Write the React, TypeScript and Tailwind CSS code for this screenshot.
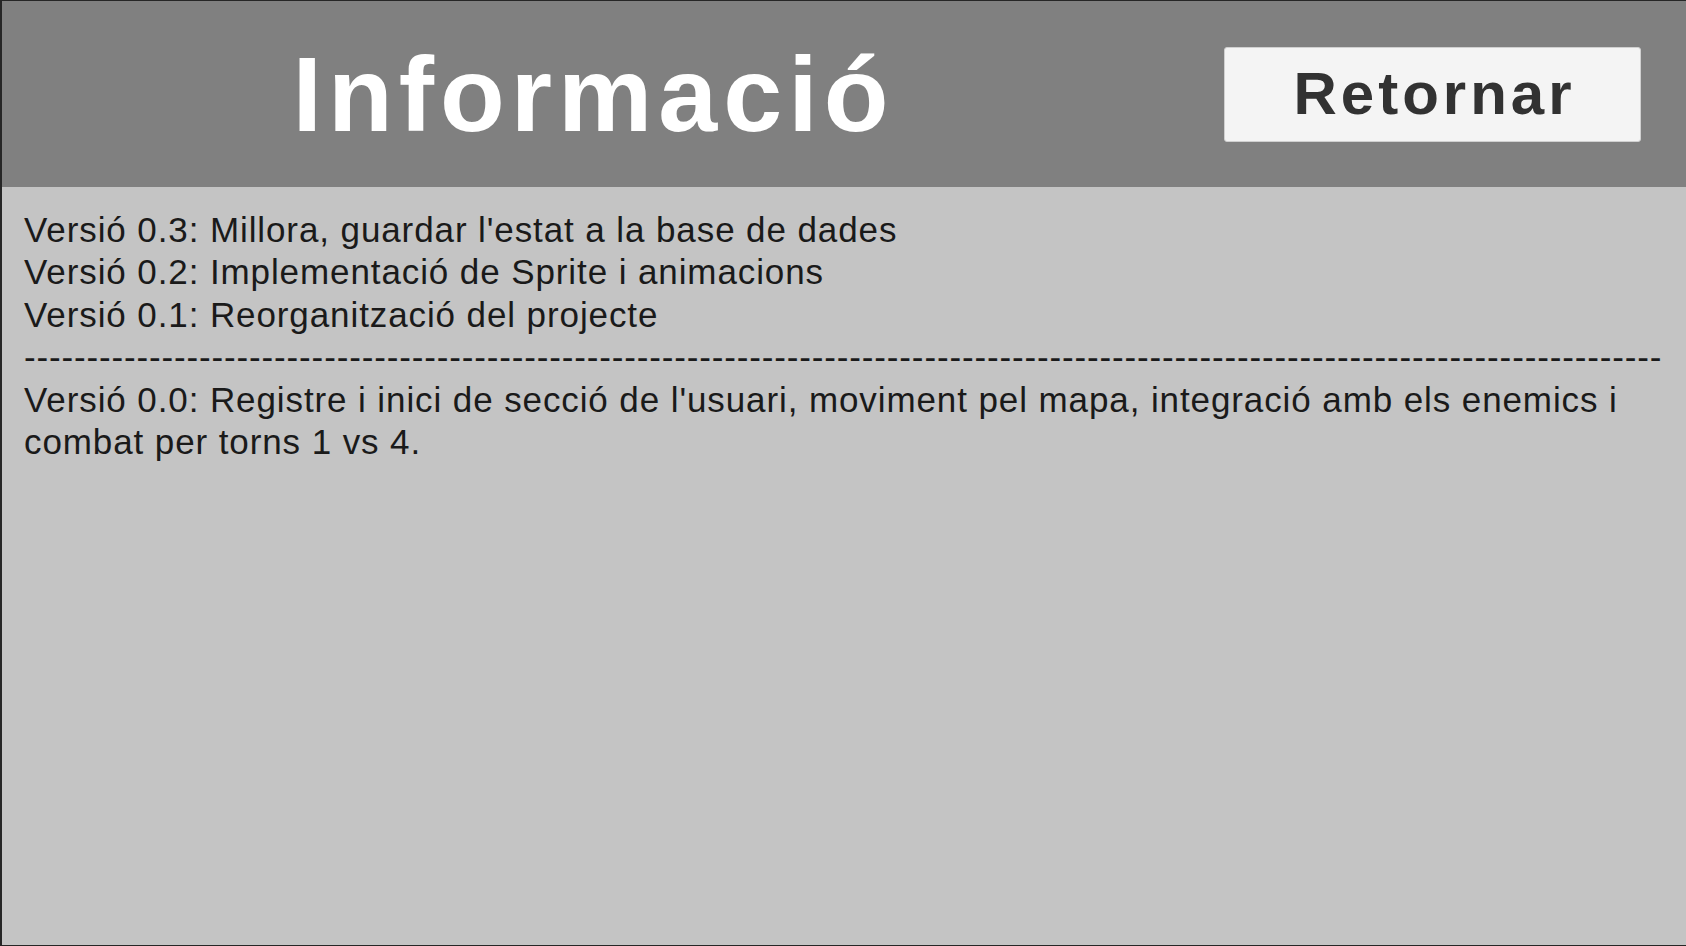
import React from 'react'

const versions = [
  "Versió 0.3: Millora, guardar l'estat a la base de dades",
  'Versió 0.2: Implementació de Sprite i animacions',
  'Versió 0.1: Reorganització del projecte',
]

const divider = '-'.repeat(131)

export default function App() {
  return (
    <div className="w-full h-[946px] bg-[#262626] pt-[1px] pb-[1px] pl-[2px] flex flex-col font-['Liberation_Sans',Arial,sans-serif]">
      {/* header bar */}
      <div className="h-[186px] bg-[#808080] flex items-center shrink-0">
        <div className="flex-1 flex justify-center pr-[39px]">
          <h1 className="text-[106px] leading-none font-bold text-white tracking-[6px]">Informació</h1>
        </div>
        <button
          type="button"
          className="w-[417px] h-[95px] mr-[45px] bg-[#f4f4f4] border border-[#d0d0d0] rounded-[3px] flex items-center justify-center"
        >
          <span className="text-[60px] leading-none font-bold text-[#323232] tracking-[4px] pl-[4px]">Retornar</span>
        </button>
      </div>

      {/* changelog */}
      <div className="flex-1 bg-[#c4c4c4] pt-[22px] pl-[22px] pr-[16px] text-[35px] leading-[42.4px] tracking-[0.9px] text-[#1a1a1a]">
        {versions.map((v) => (
          <div key={v}>{v}</div>
        ))}
        <div className="whitespace-nowrap tracking-[0.85px]">{divider}</div>
        <p className="pr-[4px]">
          Versió 0.0: Registre i inici de secció de l'usuari, moviment pel mapa, integració amb els enemics i combat per torns 1 vs 4.
        </p>
      </div>
    </div>
  )
}
